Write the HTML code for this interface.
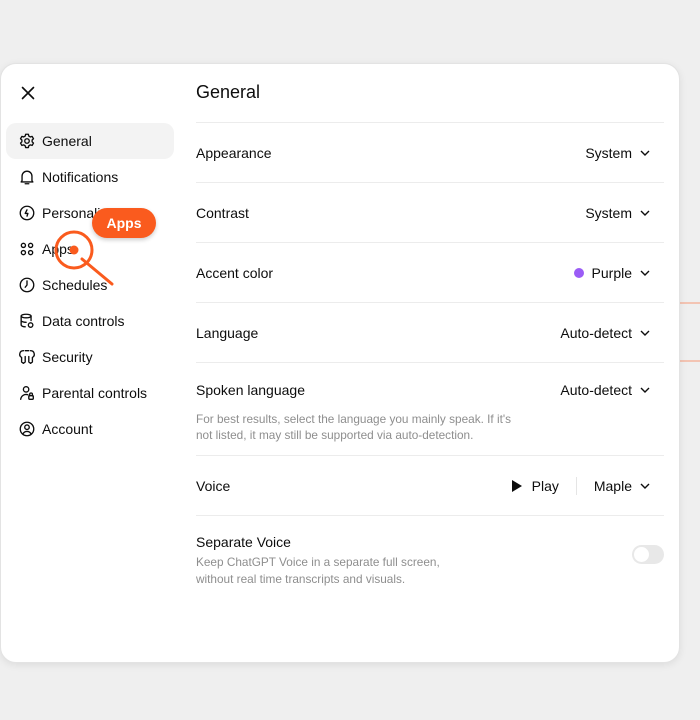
<!DOCTYPE html>
<html><head><style>
body{margin:0;width:700px;height:720px;background:#efefef;font-family:"Liberation Sans",sans-serif;color:#0d0d0d;position:relative;overflow:hidden}
.modal{position:absolute;left:0;top:63px;width:680px;height:600px;background:#fff;border-radius:16px;box-shadow:0 2px 8px rgba(0,0,0,.08);border:1px solid #e3e3e3;box-sizing:border-box}
.nav{position:absolute;left:6px;top:123px;width:168px}
.it{height:36px;display:flex;align-items:center;padding-left:12px;font-size:14px;border-radius:10px;box-sizing:border-box}
.it svg{width:18px;height:18px;margin-right:6px;fill:none;stroke:#0d0d0d;stroke-width:1.5;stroke-linecap:round;stroke-linejoin:round}
.act{background:#f3f3f3}
.main{position:absolute;left:196px;top:63px;width:468px}
h1{font-size:18px;font-weight:normal;margin:0;height:60px;line-height:58px;border-bottom:1px solid #ececec;box-sizing:border-box}
.row{border-bottom:1px solid #ececec;height:60px;display:flex;align-items:center;justify-content:space-between;font-size:14px;box-sizing:border-box}
.v{display:flex;align-items:center;padding-right:14px}
.ch{width:10px;height:6px;margin-left:8px}
.sub{font-size:12px;color:#8e8e8e;line-height:17px}
</style></head><body>
<div style="position:absolute;left:680px;top:302px;width:20px;height:2px;background:#f3c4b3"></div>
<div style="position:absolute;left:680px;top:360px;width:20px;height:2px;background:#f3c4b3"></div>
<div class="modal"></div>
<svg style="position:absolute;left:21px;top:86px" width="14" height="14" viewBox="0 0 14 14"><path d="M1.5 1.5l11 11M12.5 1.5l-11 11" stroke="#0d0d0d" stroke-width="1.6" stroke-linecap="round"/></svg>
<div class="nav">
<div class="it act"><svg viewBox="0 0 20 20"><circle cx="10" cy="10" r="2.5"/><path d="M8.5 2.5h3l.5 2 1.7 1 2-.6 1.5 2.6-1.5 1.4v2l1.5 1.4-1.5 2.6-2-.6-1.7 1-.5 2h-3l-.5-2-1.7-1-2 .6-1.5-2.6 1.5-1.4v-2L2.8 7.5l1.5-2.6 2 .6 1.7-1z"/></svg>General</div>
<div class="it"><svg viewBox="0 0 20 20"><path d="M4.5 14V9a5.5 5.5 0 0111 0v5l1 1.5h-13zM8 17.5h4"/></svg>Notifications</div>
<div class="it"><svg viewBox="0 0 20 20"><circle cx="10" cy="10" r="7.5"/><path d="M10 6.5l-2 4h3l-1 3"/></svg>Personalization</div>
<div class="it"><svg viewBox="0 0 20 20"><circle cx="6" cy="6" r="2.3"/><circle cx="14" cy="6" r="2.3"/><circle cx="6" cy="14" r="2.3"/><circle cx="14" cy="14" r="2.3"/></svg>Apps</div>
<div class="it"><svg viewBox="0 0 20 20"><circle cx="10" cy="10" r="7.5"/><path d="M10 5.5V10l-2 2.5"/></svg>Schedules</div>
<div class="it"><svg viewBox="0 0 20 20"><ellipse cx="9" cy="4.5" rx="5.5" ry="2"/><path d="M3.5 4.5v10c0 1 2 2 4.5 2M14.5 4.5v5M3.5 9.5c0 1 2.5 2 5.5 2"/><circle cx="14" cy="14.5" r="2.5"/></svg>Data controls</div>
<div class="it"><svg viewBox="0 0 20 20"><path d="M6 3a4 4 0 00-2 7.5v5l2 1.5 2-1.5V9.5M14 3a4 4 0 012 7.5v5l-2 1.5-2-1.5V9.5M8 3h4"/></svg>Security</div>
<div class="it"><svg viewBox="0 0 20 20"><circle cx="9" cy="6" r="3"/><path d="M3 17a6 6 0 018-5"/><rect x="12" y="13" width="5" height="4" rx="1"/><path d="M13 13v-1.5a1.5 1.5 0 013 0V13"/></svg>Parental controls</div>
<div class="it"><svg viewBox="0 0 20 20"><circle cx="10" cy="10" r="7.5"/><circle cx="10" cy="8" r="2.5"/><path d="M5.5 15.5a5 5 0 019 0"/></svg>Account</div>
</div>
<div style="position:absolute;left:92px;top:208px;width:64px;height:30px;border-radius:15px;background:#fa5b1e;color:#fff;font-weight:bold;font-size:14px;line-height:30px;text-align:center;box-shadow:0 2px 4px rgba(0,0,0,.2)">Apps</div>
<svg style="position:absolute;left:50px;top:226px" width="70" height="66" viewBox="0 0 70 66"><circle cx="24" cy="24" r="18" fill="none" stroke="#fa5b1e" stroke-width="3"/><circle cx="24" cy="24" r="4.5" fill="#fa5b1e"/><path d="M32 33l30 25" stroke="#fa5b1e" stroke-width="3" stroke-linecap="round"/></svg>
<div class="main">
<h1>General</h1>
<div class="row"><span>Appearance</span><span class="v">System<svg class="ch" viewBox="0 0 10 6"><path d="M1 1l4 4 4-4" stroke="#0d0d0d" stroke-width="1.4" fill="none"/></svg></span></div>
<div class="row"><span>Contrast</span><span class="v">System<svg class="ch" viewBox="0 0 10 6"><path d="M1 1l4 4 4-4" stroke="#0d0d0d" stroke-width="1.4" fill="none"/></svg></span></div>
<div class="row"><span>Accent color</span><span class="v"><span style="width:10px;height:10px;border-radius:5px;background:#9b5cf6;margin-right:8px"></span>Purple<svg class="ch" viewBox="0 0 10 6"><path d="M1 1l4 4 4-4" stroke="#0d0d0d" stroke-width="1.4" fill="none"/></svg></span></div>
<div class="row"><span>Language</span><span class="v">Auto-detect<svg class="ch" viewBox="0 0 10 6"><path d="M1 1l4 4 4-4" stroke="#0d0d0d" stroke-width="1.4" fill="none"/></svg></span></div>
<div class="row" style="height:93px;display:block;font-size:14px">
<div style="display:flex;justify-content:space-between;padding-top:19px"><span>Spoken language</span><span class="v">Auto-detect<svg class="ch" viewBox="0 0 10 6"><path d="M1 1l4 4 4-4" stroke="#0d0d0d" stroke-width="1.4" fill="none"/></svg></span></div>
<div class="sub" style="margin-top:13px;width:318px;font-size:11.8px;line-height:16px">For best results, select the language you mainly speak. If it's not listed, it may still be supported via auto-detection.</div>
</div>
<div class="row"><span>Voice</span><span class="v"><svg width="12" height="14" viewBox="0 0 12 14" style="margin-right:9px"><path d="M1 1v12l10-6z" fill="#0d0d0d"/></svg>Play<span style="width:1px;height:18px;background:#e5e5e5;margin:0 17px"></span>Maple<svg class="ch" viewBox="0 0 10 6"><path d="M1 1l4 4 4-4" stroke="#0d0d0d" stroke-width="1.4" fill="none"/></svg></span></div>
<div style="position:relative;padding-top:11px;font-size:14px;top:7px">Separate Voice
<div class="sub" style="margin-top:4px;font-size:11.8px">Keep ChatGPT Voice in a separate full screen,<br>without real time transcripts and visuals.</div>
<div style="position:absolute;right:0;top:22px;width:32px;height:19px;border-radius:10px;background:#e8e8e8"><div style="position:absolute;left:2px;top:2px;width:15px;height:15px;border-radius:8px;background:#fff"></div></div>
</div>
</div>
</body></html>
